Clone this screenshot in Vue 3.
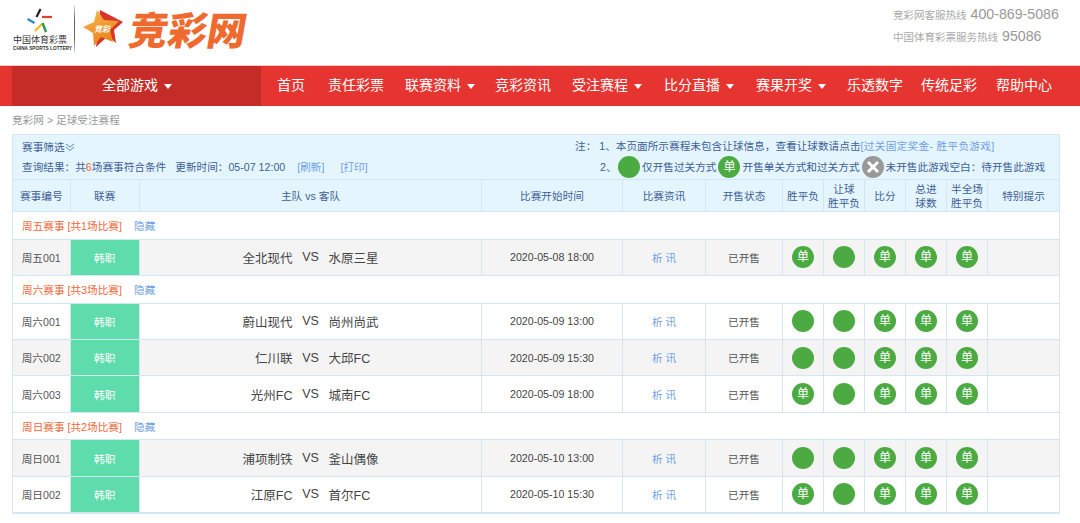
<template>
  <div class="page">
    <header class="top">
      <div class="cslc">
        <svg class="cslc-mark" width="30" height="26" viewBox="0 0 30 26">
          <path d="M13.5 1 L9.5 9" stroke="#222" stroke-width="2.2" />
          <path d="M15 9 H25" stroke="#e0402c" stroke-width="2.2" />
          <path d="M0.500 11 L7.500 15" stroke="#2f86d0" stroke-width="2.4" />
          <path d="M8 23 L15 16" stroke="#f0c020" stroke-width="2.4" />
          <path d="M15.500 15 L19 24" stroke="#2c9a50" stroke-width="2.4" />
        </svg>
        <div class="cslc-cn">中国体育彩票</div>
        <div class="cslc-en">CHINA SPORTS LOTTERY</div>
      </div>
      <div class="logo-rule"></div>
      <svg class="star" width="42" height="40" viewBox="0 0 42 40">
        <defs>
          <linearGradient id="starFill" x1="0" y1="0" x2="0.4" y2="1">
            <stop offset="0" stop-color="#f9b84a" />
            <stop offset="1" stop-color="#ea8420" />
          </linearGradient>
        </defs>
        <path d="M17 1 L40 13 L31 21 L33 34 L25 27 L13 38 Z" fill="#d8352a" />
        <path d="M14 1 L21 11 L36 12 L27 21 L30 33 L18 28 L11 37 L10 24 L0 18 L11 13 Z" fill="url(#starFill)" />
        <text x="11" y="23" class="star-text">竞彩</text>
      </svg>
      <div class="brand">竞彩网</div>
      <div class="hotline">
        <div class="hot-row">竞彩网客服热线<span class="hot-num">400-869-5086</span></div>
        <div class="hot-row">中国体育彩票服务热线<span class="hot-num">95086</span></div>
      </div>
    </header>

    <nav class="nav">
      <div class="nav-all">全部游戏<i class="caret"></i></div>
      <ul class="nav-list">
        <li v-for="item in navItems" :key="item.label">
          {{ item.label }}<i v-if="item.menu" class="caret"></i>
        </li>
      </ul>
    </nav>

    <div class="crumb">竞彩网 &gt; 足球受注赛程</div>

    <section class="panel">
      <div class="filter">
        <div class="filter-left">
          <div class="filter-title">
            <span>赛事筛选</span>
            <svg width="10" height="9" viewBox="0 0 10 9" fill="none" stroke="#5b8fc7">
              <path d="M1 1 L5 4 L9 1" />
              <path d="M1 4 L5 7.500 L9 4" />
            </svg>
          </div>
          <div class="filter-result">
            <span>查询结果：共<b class="hit">6</b>场赛事符合条件</span>
            <span class="updated">更新时间：<span class="latin">05-07 12:00</span></span>
            <a class="link refresh">[刷新]</a>
            <a class="link print">[打印]</a>
          </div>
        </div>
        <div class="filter-note">
          <div>注： 1、本页面所示赛程未包含让球信息，查看让球数请点击<a class="link note-link">[过关固定奖金- 胜平负游戏]</a></div>
          <div class="legend">
            <span class="legend-no">2、</span>
            <span class="dot"></span>
            <span>仅开售过关方式</span>
            <span class="dot">单</span>
            <span>开售单关方式和过关方式</span>
            <span class="dot off">
              <svg width="14" height="14" viewBox="0 0 14 14" stroke="#fff" stroke-width="3">
                <path d="M2 2 L12 12 M12 2 L2 12" />
              </svg>
            </span>
            <span>未开售此游戏空白：待开售此游戏</span>
          </div>
        </div>
      </div>

      <div class="row head">
        <div class="cell">赛事编号</div>
        <div class="cell">联赛</div>
        <div class="cell"><span>主队 <span class="latin">vs</span> 客队</span></div>
        <div class="cell">比赛开始时间</div>
        <div class="cell">比赛资讯</div>
        <div class="cell">开售状态</div>
        <div class="cell">胜平负</div>
        <div class="cell"><span>让球<br />胜平负</span></div>
        <div class="cell">比分</div>
        <div class="cell"><span>总进<br />球数</span></div>
        <div class="cell"><span>半全场<br />胜平负</span></div>
        <div class="cell last">特别提示</div>
      </div>

      <template v-for="group in groups" :key="group.title">
        <div class="group">
          <span class="group-title">{{ group.title }}</span>
          <a class="link hide">隐藏</a>
        </div>
        <div
          v-for="m in group.matches"
          :key="m.no"
          class="row match"
          :class="{ shaded: m.shaded }"
        >
          <div class="cell no">{{ m.no }}</div>
          <div class="cell league">韩职</div>
          <div class="cell teams">
            <span class="home">{{ m.home }}</span>
            <span class="vs">VS</span>
            <span class="away">{{ m.away }}</span>
          </div>
          <div class="cell time">{{ m.time }}</div>
          <div class="cell"><a class="link">析 讯</a></div>
          <div class="cell status">已开售</div>
          <div v-for="(single, i) in m.plays" :key="i" class="cell">
            <span class="dot">{{ single ? '单' : '' }}</span>
          </div>
          <div class="cell last"></div>
        </div>
      </template>
    </section>
  </div>
</template>

<script setup>
const navItems = [
  { label: '首页' },
  { label: '责任彩票' },
  { label: '联赛资料', menu: true },
  { label: '竞彩资讯' },
  { label: '受注赛程', menu: true },
  { label: '比分直播', menu: true },
  { label: '赛果开奖', menu: true },
  { label: '乐透数字' },
  { label: '传统足彩' },
  { label: '帮助中心' }
]

const groups = [
  {
    title: '周五赛事 [共1场比赛]',
    matches: [
      { no: '周五001', home: '全北现代', away: '水原三星', time: '2020-05-08 18:00', shaded: true, plays: [1, 0, 1, 1, 1] }
    ]
  },
  {
    title: '周六赛事 [共3场比赛]',
    matches: [
      { no: '周六001', home: '蔚山现代', away: '尚州尚武', time: '2020-05-09 13:00', shaded: false, plays: [0, 0, 1, 1, 1] },
      { no: '周六002', home: '仁川联', away: '大邱FC', time: '2020-05-09 15:30', shaded: true, plays: [0, 0, 1, 1, 1] },
      { no: '周六003', home: '光州FC', away: '城南FC', time: '2020-05-09 18:00', shaded: false, plays: [1, 0, 1, 1, 1] }
    ]
  },
  {
    title: '周日赛事 [共2场比赛]',
    matches: [
      { no: '周日001', home: '浦项制铁', away: '釜山偶像', time: '2020-05-10 13:00', shaded: true, plays: [0, 0, 1, 1, 1] },
      { no: '周日002', home: '江原FC', away: '首尔FC', time: '2020-05-10 15:30', shaded: false, plays: [1, 0, 1, 1, 1] }
    ]
  }
]
</script>

<style>
html, body {
  margin: 0;
  background: #fff;
  overflow: hidden;
}
</style>

<style scoped>
.page {
  width: 1080px;
  height: 523px;
  overflow: hidden;
  font-family: "Liberation Sans", "Noto Sans CJK SC", sans-serif;
  font-size: 10.650px;
  color: #555;
}

.top {
  height: 65px;
  display: flex;
  align-items: flex-start;
  box-sizing: border-box;
}

.cslc {
  width: 54px;
  margin-left: 13px;
  padding-top: 8px;
}
.cslc-mark {
  display: block;
  margin-left: 14px;
}
.cslc-cn {
  font-size: 9px;
  line-height: 10px;
  color: #333;
  margin-top: 1px;
  white-space: nowrap;
}
.cslc-en {
  font-size: 5px;
  line-height: 6px;
  font-weight: 700;
  color: #333;
  white-space: nowrap;
  transform: scaleX(0.95);
  transform-origin: left;
}

.logo-rule {
  width: 1px;
  height: 48px;
  margin: 5px 0 0 7px;
  background: linear-gradient(#ddd, #666 30%, #666 70%, #ddd);
}

.star {
  margin: 9px 0 0 8px;
  flex: none;
}
.star-text {
  font-size: 8px;
  font-style: italic;
  font-weight: 700;
  fill: #fff;
}

.brand {
  margin: 4px 0 0 5px;
  width: 118px;
  font-size: 39px;
  line-height: 48px;
  font-weight: 900;
  font-family: "Noto Sans CJK SC", sans-serif;
  color: #ef6a2e;
  white-space: nowrap;
  transform: skewX(-10deg);
}

.hotline {
  margin-left: auto;
  padding: 4px 20px 0 0;
  width: 167px;
  font-size: 10.500px;
  color: #aaa;
}
.hot-row {
  height: 21.500px;
  line-height: 21.500px;
  white-space: nowrap;
}
.hot-num {
  font-size: 14.200px;
  color: #999;
  margin-left: 4px;
}

.nav {
  height: 40px;
  display: flex;
  background: #e63531;
  border-top: 1px solid #f6c9c4;
  color: #fff;
  font-size: 14px;
  line-height: 39px;
}
.nav-all {
  width: 249px;
  margin-left: 12px;
  text-align: center;
  background: #c52c27;
}
.nav-list {
  display: flex;
  gap: 21px;
  margin: 0 0 0 16px;
  padding: 0;
  list-style: none;
}
.nav-list li {
  white-space: nowrap;
}
.nav-list li:nth-child(2),
.nav-list li:nth-child(6),
.nav-list li:nth-child(7) {
  margin-left: 2px;
}
.nav-list li:nth-child(8) {
  margin-left: 1px;
}
.nav-list li:nth-child(9) {
  margin-left: -3px;
}
.nav-list li:nth-child(10) {
  margin-left: -2px;
}
.caret {
  display: inline-block;
  margin: 0 -1px 0 6px;
  vertical-align: middle;
  border-top: 5px solid #fff;
  border-left: 4px solid transparent;
  border-right: 4px solid transparent;
}

.crumb {
  height: 28px;
  padding-left: 12px;
  line-height: 28px;
  color: #999;
}

.panel {
  width: 1048px;
  margin-left: 12px;
  box-sizing: border-box;
  border: 1px solid #d5e7f5;
  background: #fff;
}

.filter {
  height: 45px;
  display: flex;
  background: #e5f5fd;
  color: #3e5f96;
  border-bottom: 1px solid #d2e6f5;
  box-sizing: border-box;
}
.filter-left {
  width: 553px;
  padding-left: 9px;
  flex: none;
}
.filter-title {
  display: flex;
  align-items: center;
  height: 20px;
  padding-top: 2px;
  line-height: 19px;
}
.filter-result {
  display: flex;
  line-height: 20px;
  white-space: nowrap;
}
.hit {
  color: #f0622e;
  font-weight: 400;
}
.updated {
  margin-left: 9px;
}
.latin {
  font-family: "Liberation Sans", sans-serif;
}
.refresh {
  margin-left: 12px;
}
.print {
  margin-left: 16px;
}
.link {
  color: #6f9fe6;
}
.note-link {
  letter-spacing: 0.300px;
}

.filter-note {
  padding-top: 2px;
  line-height: 19px;
  white-space: nowrap;
}
.legend {
  display: flex;
  align-items: center;
  gap: 2px;
  height: 22px;
  padding-left: 25px;
}
.legend-no {
  width: 16px;
}

.dot {
  display: inline-flex;
  align-items: center;
  justify-content: center;
  width: 22px;
  height: 22px;
  border-radius: 50%;
  background: #4caa42;
  color: #fff;
  font-size: 12px;
  line-height: 22px;
  flex: none;
}
.dot.off {
  background: #999;
}

.row {
  display: grid;
  grid-template-columns: 57.500px 69.500px 342px 141px 83px 77px 41px 41px 41px 41px 41px 1fr;
  border-bottom: 1px solid #d2e6f5;
  box-sizing: border-box;
}
.cell {
  display: flex;
  align-items: center;
  justify-content: center;
  text-align: center;
  border-right: 1px solid #d2e6f5;
  box-sizing: border-box;
  min-width: 0;
}
.cell.last {
  border-right: 0;
}

.head {
  height: 32px;
  background: #e5f5fd;
  color: #3e5f96;
  line-height: 14px;
}

.group {
  height: 27.600px;
  box-sizing: border-box;
  border-bottom: 1px solid #d2e6f5;
  padding-left: 9px;
  line-height: 28px;
  display: flex;
}
.group-title {
  width: 112px;
  color: #f0683a;
}

.match {
  height: 36.400px;
}
.match.shaded {
  background: #f4f4f4;
}
.no {
  color: #555;
}
.league {
  background: #5fdcac;
  color: #fff;
}
.teams {
  display: grid;
  grid-template-columns: 1fr 36px 1fr;
  column-gap: 0;
  font-size: 12.500px;
  color: #444;
}
.home {
  text-align: right;
}
.away {
  text-align: left;
}
.time {
  color: #444;
}
.status {
  color: #555;
}
</style>
